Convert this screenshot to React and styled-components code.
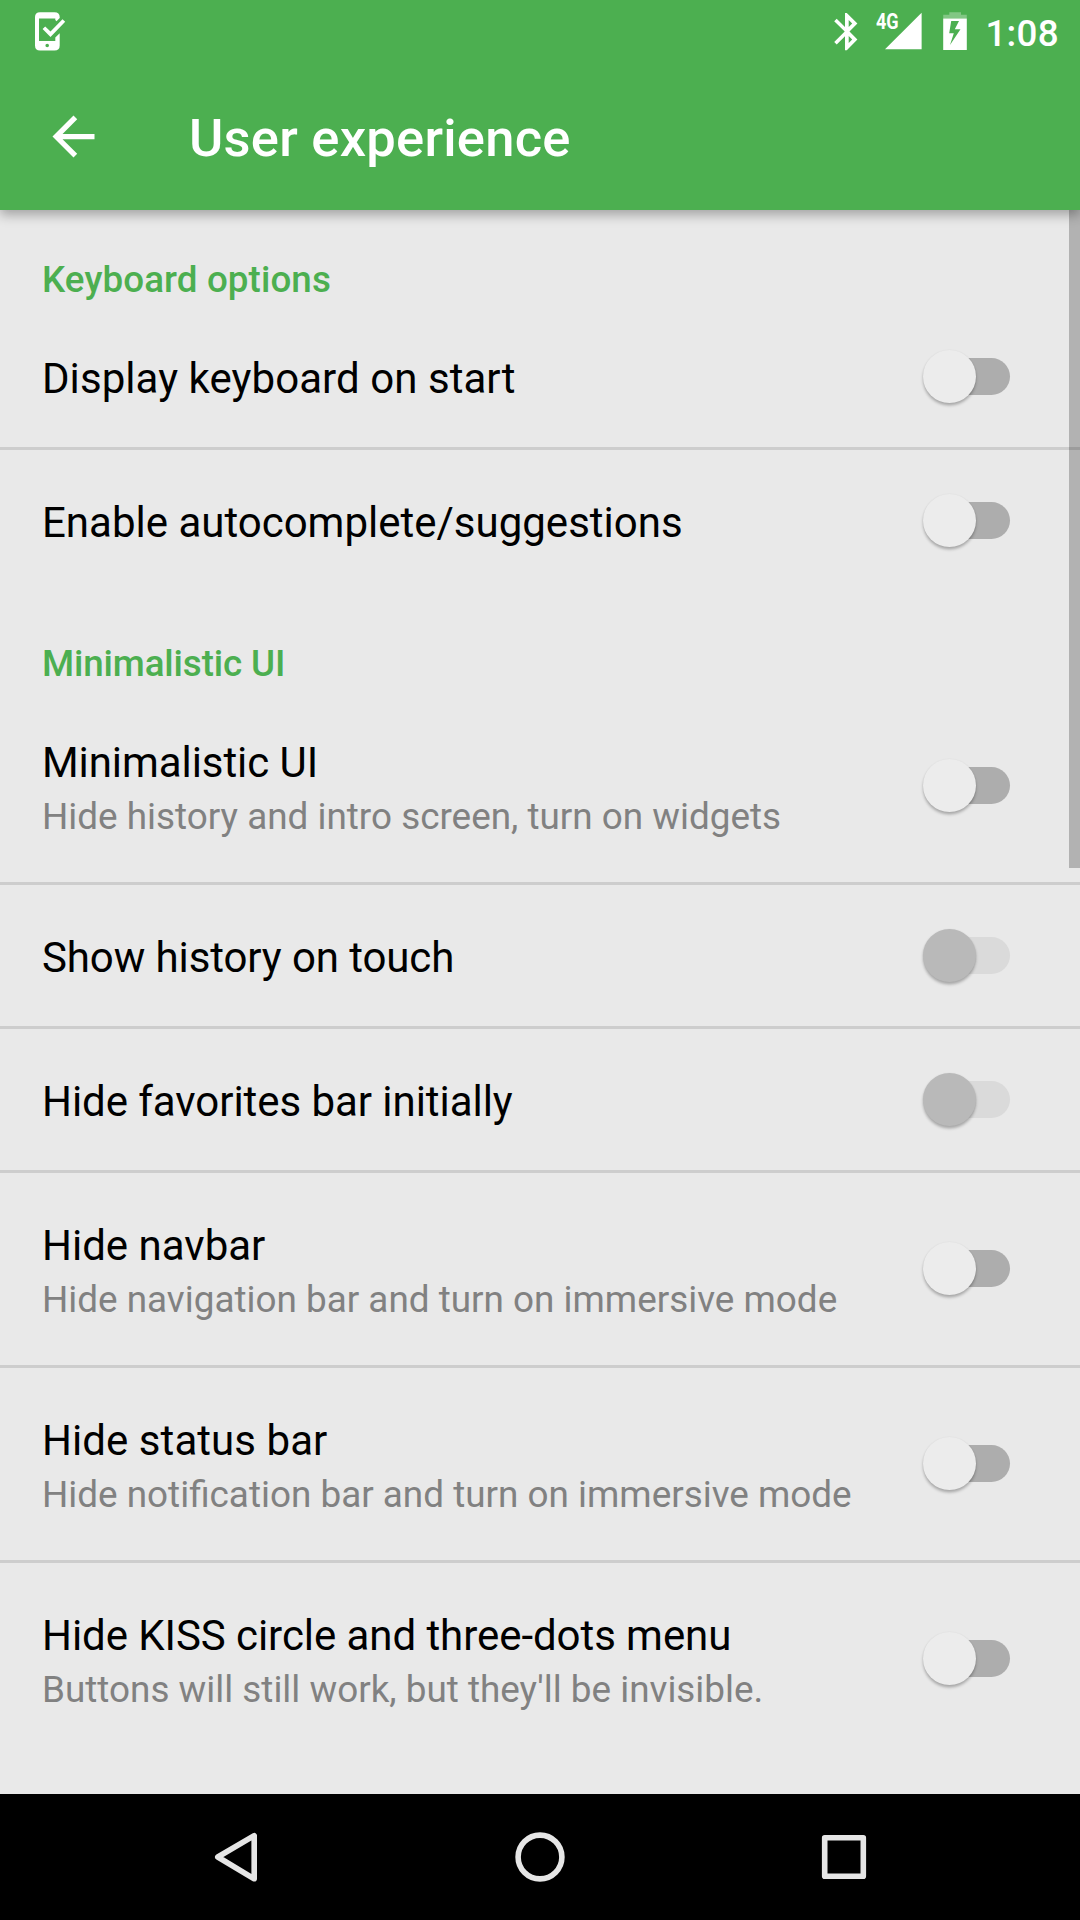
import React, { useState } from "react";
import styled, { createGlobalStyle, css } from "styled-components";

const GlobalStyle = createGlobalStyle`
  *, *::before, *::after { box-sizing: border-box; }
  body {
    margin: 0;
    background: #e9e9e9;
    font-family: Roboto, "Liberation Sans", sans-serif;
  }
`;

const Screen = styled.div`
  width: 1080px;
  height: 1920px;
  display: flex;
  flex-direction: column;
  overflow: hidden;
  background: #e9e9e9;
`;

const Header = styled.header`
  position: relative;
  z-index: 1;
  flex: none;
  height: 210px;
  background: #4caf50;
  color: #fff;
  box-shadow: 0 5px 11px rgba(0, 0, 0, 0.3);
`;

const StatusBar = styled.div`
  height: 63px;
  display: flex;
  align-items: center;
  justify-content: space-between;
  padding: 0 21px 0 34px;
`;

const StatusIcons = styled.div`
  display: flex;
  align-items: center;
`;

const StatusIcon = styled.svg`
  display: block;
  flex: none;
  height: 63px;
  width: ${(p) => p.$width}px;
  fill: #fff;
`;

const Network = styled.span`
  width: 9px;
  height: 44px;
  font-size: 22px;
  line-height: 24px;
  font-weight: 700;
  white-space: nowrap;
  transform: scaleX(0.82);
  transform-origin: left;
`;

const Clock = styled.time`
  width: 75px;
  margin-left: 16px;
  padding-top: 3px;
  font-size: 36.75px;
  line-height: 43px;
  font-weight: 500;
  letter-spacing: 0.3px;
  text-align: right;
  white-space: nowrap;
`;

const Toolbar = styled.div`
  height: 147px;
  display: flex;
  align-items: center;
  gap: 84px;
  padding: 0 42px;
`;

const BackButton = styled.button`
  flex: none;
  width: 63px;
  height: 63px;
  padding: 0;
  border: 0;
  background: none;

  svg { display: block; width: 63px; height: 63px; fill: #fff; }
`;

const Title = styled.h1`
  margin: 0;
  padding-top: 3px;
  font-size: 52.5px;
  line-height: 62px;
  font-weight: 500;
  letter-spacing: 0.24px;
`;

const Content = styled.main`
  position: relative;
  flex: 1;
  min-height: 0;
  overflow: hidden;
`;

const Scrollbar = styled.div`
  position: absolute;
  top: 0;
  right: 0;
  width: 11px;
  height: 658px;
  background: rgba(0, 0, 0, 0.235);
`;

const SectionTitle = styled.h2`
  height: 96px;
  margin: 0;
  padding: 48px 42px 0;
  color: #4caf50;
  font-size: 36.75px;
  line-height: 43px;
  font-weight: 500;
  letter-spacing: ${(p) => p.$tracking || 0}px;
`;

const Row = styled.div`
  display: flex;
  align-items: flex-start;
  justify-content: space-between;
  padding: 0 70px 0 42px;
  border-bottom: 3px solid ${(p) => (p.$last ? "transparent" : "#cdcdcd")};
`;

const Labels = styled.div`
  display: flex;
  flex-direction: column;
  gap: 8px;
  padding: 48px 0 44px;
`;

const Label = styled.span`
  color: #000;
  font-size: 42px;
  line-height: 49px;
  letter-spacing: ${(p) => p.$tracking || 0}px;
`;

const Summary = styled.span`
  color: #818181;
  font-size: 36.87px;
  line-height: 43px;
`;

const Track = styled.button`
  flex: none;
  display: flex;
  align-items: center;
  width: 79px;
  height: 37px;
  margin-top: ${(p) => (p.$tall ? 77 : 52)}px;
  padding: 0;
  border: 0;
  border-radius: 19px;
  background: #adadad;
  ${(p) => p.disabled && css`background: #dadada;`}
`;

const Thumb = styled.span`
  flex: none;
  width: 53px;
  height: 53px;
  margin-left: ${(p) => (p.$on ? 34 : -8)}px;
  border-radius: 50%;
  background: ${(p) => (p.$disabled ? "#b9b9b9" : "#ececec")};
  box-shadow: 0 2.5px 3px rgba(0, 0, 0, 0.27), 0 0 2px rgba(0, 0, 0, 0.05);
`;

const NavBar = styled.nav`
  flex: none;
  height: 126px;
  display: flex;
  align-items: center;
  justify-content: center;
  gap: 220px;
  background: #000;
`;

const NavIcon = styled.svg`
  width: 84px;
  height: 84px;
  fill: none;
  stroke: #e6e6e6;
  stroke-width: 5.6;
  stroke-linejoin: round;
`;

const sections = [
  {
    title: "Keyboard options",
    tracking: 0.1,
    items: [
      { label: "Display keyboard on start", tracking: 0.06 },
      { label: "Enable autocomplete/suggestions" },
    ],
  },
  {
    title: "Minimalistic UI",
    tracking: -0.13,
    items: [
      { label: "Minimalistic UI", tracking: -0.07, summary: "Hide history and intro screen, turn on widgets" },
      { label: "Show history on touch", tracking: -0.1, disabled: true },
      { label: "Hide favorites bar initially", tracking: -0.05, disabled: true },
      { label: "Hide navbar", summary: "Hide navigation bar and turn on immersive mode" },
      { label: "Hide status bar", tracking: 0.06, summary: "Hide notification bar and turn on immersive mode" },
      {
        label: "Hide KISS circle and three-dots menu",
        tracking: -0.06,
        summary: "Buttons will still work, but they'll be invisible.",
      },
    ],
  },
];

function Preference({ label, summary, tracking, disabled, last }) {
  const [on, setOn] = useState(false);
  return (
    <Row $last={last}>
      <Labels>
        <Label $tracking={tracking}>{label}</Label>
        {summary && <Summary>{summary}</Summary>}
      </Labels>
      <Track
        role="switch"
        aria-checked={on}
        aria-label={label}
        disabled={disabled}
        $tall={Boolean(summary)}
        onClick={() => setOn(!on)}
      >
        <Thumb $on={on} $disabled={disabled} />
      </Track>
    </Row>
  );
}

export default function App() {
  return (
    <>
      <GlobalStyle />
      <Screen>
        <Header>
          <StatusBar>
            <StatusIcon $width={34} viewBox="34 0 34 63">
              <path
                fillRule="evenodd"
                d="M40 12.3H54.5Q59.7 12.3 59.7 17V18L56.5 21.3L55.3 20V18.6H39V41H55.3V37.5L59.7 33.2V45.5Q59.7 50.6 54.5 50.6H40Q35 50.6 35 45.5V17Q35 12.3 40 12.3ZM47.2 43.8A1.8 1.7 0 1 0 47.2 47.2A1.8 1.7 0 1 0 47.2 43.8Z"
              />
              <path d="M42.6 29L45.2 26.6L50.5 31.6L62.5 19.3L65.2 21.7L50.5 37.1Z" />
            </StatusIcon>
            <StatusIcons>
              <StatusIcon $width={42} viewBox="834 0 42 63">
                <path
                  fillRule="evenodd"
                  d="M845 13H846.8L857.4 23.6L849.5 31.5L857.4 39.5L846.8 50.2H845V36.2L836.7 44.5L834.2 42L844.7 31.5L834.2 21.2L836.7 18.7L845 27ZM848.7 20.1V27L852.2 23.6ZM848.7 36.1V43.1L852.2 39.5Z"
                />
              </StatusIcon>
              <Network>4G</Network>
              <StatusIcon $width={58} viewBox="885 0 58 63">
                <path d="M885 49.3L921.6 12.7V49.3Z" />
              </StatusIcon>
              <StatusIcon $width={25} viewBox="943 0 25 63">
                <path opacity="0.3" d="M949.3 12.2H961V14.8H966.8V18.6H943.2V14.8H949.3Z" />
                <path fillRule="evenodd" d="M943.2 18.6H966.8V50H943.2ZM951.2 21L949.2 33.2H953.8L950 45L960.5 29.3H954.8L959 21Z" />
              </StatusIcon>
              <Clock>1:08</Clock>
            </StatusIcons>
          </StatusBar>
          <Toolbar>
            <BackButton aria-label="Navigate up">
              <svg viewBox="0 0 24 24">
                <path d="M20 11H7.83l5.59-5.59L12 4l-8 8 8 8 1.41-1.41L7.83 13H20v-2z" />
              </svg>
            </BackButton>
            <Title>User experience</Title>
          </Toolbar>
        </Header>
        <Content>
          {sections.map((section) => (
            <section key={section.title}>
              <SectionTitle $tracking={section.tracking}>{section.title}</SectionTitle>
              {section.items.map((item, i) => (
                <Preference key={item.label} {...item} last={i === section.items.length - 1} />
              ))}
            </section>
          ))}
          <Scrollbar />
        </Content>
        <NavBar>
          <NavIcon viewBox="0 0 84 84">
            <path d="M23.8 42L60.2 20.6V63.8Z" />
          </NavIcon>
          <NavIcon viewBox="0 0 84 84">
            <circle cx="42" cy="42" r="21.9" />
          </NavIcon>
          <NavIcon viewBox="0 0 84 84">
            <rect x="22.7" y="22.7" width="38.6" height="38.6" />
          </NavIcon>
        </NavBar>
      </Screen>
    </>
  );
}
